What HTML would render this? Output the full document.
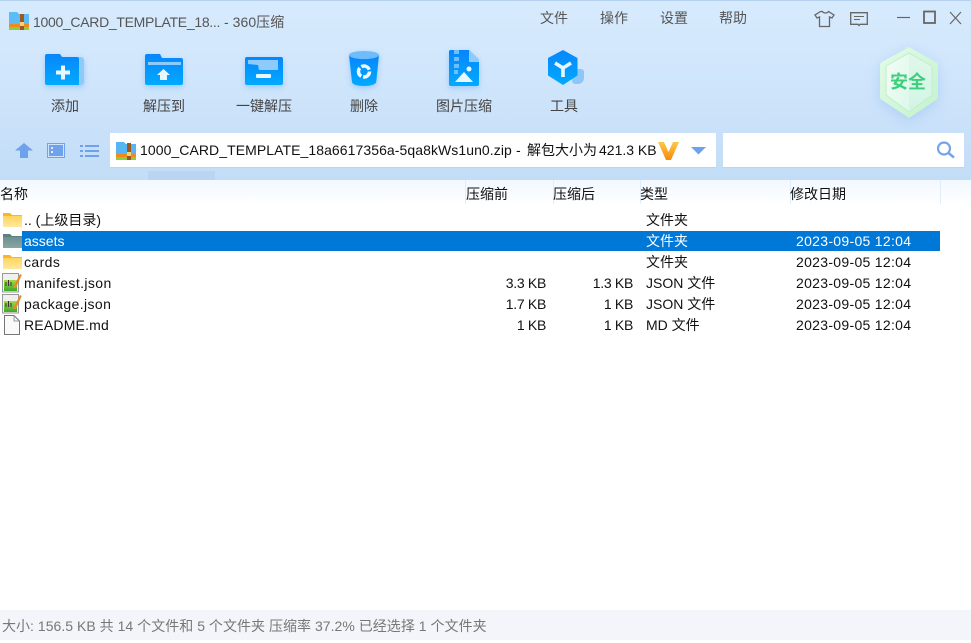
<!DOCTYPE html>
<html lang="zh">
<head>
<meta charset="utf-8">
<style>
html,body{margin:0;padding:0;width:971px;height:643px;overflow:hidden;background:#fff;}
body{position:relative;font-family:"Liberation Sans","Noto Sans CJK SC",sans-serif;font-size:14px;color:#111;}
.a{position:absolute;white-space:nowrap;line-height:20px;}
svg{position:absolute;display:block;overflow:visible;}
.top{position:absolute;left:0;top:0;width:971px;height:180px;background:linear-gradient(#d7eafd 0,#d2e7fc 60px,#c9e1f9 125px,#c3ddf7 180px);border-top:1px solid #b5d2f0;box-sizing:border-box;}
.tb{color:#444;font-size:14px;width:90px;text-align:center;top:96px;}
.menu{color:#555;font-size:14px;top:8px;}
.hd{position:absolute;left:0;top:180px;width:971px;height:26px;background:linear-gradient(#f2f8ff,#fbfdff 70%,#fff);}
.col{position:absolute;top:180px;width:1px;height:24px;background:#e0edfa;}
.h{top:184px;font-size:14px;color:#111;}
.sel{position:absolute;left:22px;top:231px;width:918px;height:20px;background:#0078d7;}
.n{left:24px;}
.t{left:646px;font-size:14px;}
.d{left:796px;font-size:14px;letter-spacing:.3px;}
.s{text-align:right;width:80px;font-size:14px;letter-spacing:-.3px;}
.st{position:absolute;left:0;top:610px;width:971px;height:30px;background:#f3f5fa;}
.w{color:#fff;}
</style>
</head>
<body>
<div class="top"></div>

<!-- title icon -->
<svg style="left:9px;top:11px" width="20" height="19" viewBox="0 0 20 19">
<path d="M0 1h8l2 2h10v13H0z" fill="#5cbcf5"/><rect y="13" width="20" height="3" fill="#f08a1c"/><rect y="16" width="20" height="3" fill="#8fce3a"/><rect x="11" y="3" width="4" height="16" fill="#9c5a1e"/><rect x="11" y="11" width="4" height="4" fill="#f3d27a"/>
</svg>
<div class="a" style="left:33px;top:12px;color:#555;font-size:14px;letter-spacing:-.3px">1000_CARD_TEMPLATE_18...</div>
<div class="a" style="left:224px;top:12px;color:#555;font-size:14px;letter-spacing:.05px">- 360压缩</div>

<!-- menu -->
<div class="a menu" style="left:540px">文件</div>
<div class="a menu" style="left:600px">操作</div>
<div class="a menu" style="left:660px">设置</div>
<div class="a menu" style="left:719px">帮助</div>

<!-- top right icons -->
<svg style="left:814px;top:10px" width="21" height="18" viewBox="0 0 21 18" fill="none" stroke="#666" stroke-width="1.3">
<path d="M6.500 1.500 1 5l2 3 2.500-1v9.500h10V7l2.500 1 2-3-5.500-3.500c-1 2-5 2-6 0z"/>
</svg>
<svg style="left:850px;top:12px" width="18" height="14" viewBox="0 0 18 14" fill="none" stroke="#666" stroke-width="1.300">
<path d="M.7.700h16.600v11.600H10l-1 1.200-1-1.200H.7z"/><path d="M4 4.500h10M4 7.500h6" stroke-width="1"/>
</svg>
<svg style="left:897px;top:10px" width="64" height="16" viewBox="0 0 64 16" fill="none" stroke="#666">
<path d="M0 7.500h13" stroke-width="1.200"/><rect x="27" y="1.500" width="11" height="11.500" stroke-width="1.800"/><path d="M53 2l11 12M64 2 53 14" stroke-width="1.200"/>
</svg>

<!-- add -->
<svg style="left:45px;top:54px;filter:drop-shadow(0 2px 3px rgba(30,140,250,.3))" width="39" height="31" viewBox="0 0 39 31">
<defs><linearGradient id="g" x1="0" y1="0" x2="0" y2="1"><stop offset="0" stop-color="#0786fb"/><stop offset="1" stop-color="#01aaff"/></linearGradient></defs>
<path d="M16 3h20a3 3 0 0 1 3 3v22a3 3 0 0 1-3 3h-4V3z" fill="#8ccbfb"/>
<path d="M2 0h13l2 3h15a2 2 0 0 1 2 2v26H2a2 2 0 0 1-2-2V2a2 2 0 0 1 2-2z" fill="url(#g)"/>
<path d="M16 12h4v5h5v4h-5v5h-4v-5h-5v-4h5z" fill="#e8f6ff" transform="translate(0 -.5)"/>
</svg>
<!-- extract to -->
<svg style="left:145px;top:54px;filter:drop-shadow(0 2px 3px rgba(30,140,250,.3))" width="38" height="31" viewBox="0 0 38 31">
<defs><linearGradient id="g2" x1="0" y1="0" x2="0" y2="1"><stop offset="0" stop-color="#0786fb"/><stop offset="1" stop-color="#01aaff"/></linearGradient></defs>
<path d="M2 0h13l2 4h19a2 2 0 0 1 2 2v23a2 2 0 0 1-2 2H2a2 2 0 0 1-2-2V2a2 2 0 0 1 2-2z" fill="url(#g2)"/>
<rect x="3" y="8" width="33" height="3" fill="#8ccbfb"/>
<path d="M18.500 15l6.500 6h-3v5h-7v-5h-3z" fill="#e8f6ff"/>
</svg>
<!-- one click -->
<svg style="left:245px;top:57px;filter:drop-shadow(0 2px 3px rgba(30,140,250,.3))" width="38" height="28" viewBox="0 0 38 28">
<defs><linearGradient id="g3" x1="0" y1="0" x2="0" y2="1"><stop offset="0" stop-color="#0786fb"/><stop offset="1" stop-color="#01aaff"/></linearGradient></defs>
<rect width="38" height="28" rx="2" fill="url(#g3)"/>
<path d="M3 3h30v10H14l-1-5-10-1z" fill="#8ccbfb"/>
<rect x="11" y="17" width="15" height="4" rx="1" fill="#e8f6ff"/>
</svg>
<!-- delete -->
<svg style="left:349px;top:50px;filter:drop-shadow(0 2px 3px rgba(30,140,250,.3))" width="30" height="37" viewBox="0 0 30 37">
<defs><linearGradient id="g4" x1="0" y1="0" x2="0" y2="1"><stop offset="0" stop-color="#0786fb"/><stop offset="1" stop-color="#01aaff"/></linearGradient></defs>
<path d="M0 5 3 32c.2 2.500 6 4 12 4S27 34.500 27.200 32L30 5z" fill="url(#g4)"/>
<ellipse cx="15" cy="5" rx="15" ry="4" fill="#6fbcfb"/>
<circle cx="15" cy="21.500" r="5.500" fill="none" stroke="#eef8ff" stroke-width="3.500" stroke-dasharray="9.500 2"/>
</svg>
<!-- image compress -->
<svg style="left:449px;top:50px;filter:drop-shadow(0 2px 3px rgba(30,140,250,.3))" width="30" height="36" viewBox="0 0 30 36">
<defs><linearGradient id="g5" x1="0" y1="0" x2="0" y2="1"><stop offset="0" stop-color="#0786fb"/><stop offset="1" stop-color="#01aaff"/></linearGradient></defs>
<path d="M1 0h19l10 10v24a2 2 0 0 1-2 2H2a2 2 0 0 1-2-2V1z" fill="url(#g5)"/>
<path d="M20 0l10 10v2H20z" fill="#8ccbfb"/>
<path d="M5 0h5v4H5zM5 7h5v4H5zM5 14h5v4H5zM5 20h4v4H5z" fill="#6ec0fb"/>
<path d="M6 32l9-10 9 10z" fill="#e8f6ff"/><circle cx="20" cy="19" r="2.500" fill="#e8f6ff"/>
</svg>
<!-- tools -->
<svg style="left:547px;top:50px" width="38" height="36" viewBox="0 0 38 36">
<defs><linearGradient id="g6" x1="0" y1="0" x2="0" y2="1"><stop offset="0" stop-color="#0786fb"/><stop offset="1" stop-color="#01aaff"/></linearGradient></defs>
<path d="M28 19h6a3 3 0 0 1 3 3v6a6 6 0 0 1-6 6h-3a3 3 0 0 1-3-3z" fill="#8fc6fa"/>
<path d="M16 0l14.500 8v17.500L16 35 1 25.500V8z" fill="url(#g6)"/>
<path d="M8 13l8 5 8-5M16 18v9" fill="none" stroke="#e8f6ff" stroke-width="3.600"/>
</svg>

<div class="a tb" style="left:20px">添加</div>
<div class="a tb" style="left:119px">解压到</div>
<div class="a tb" style="left:219px">一键解压</div>
<div class="a tb" style="left:319px">删除</div>
<div class="a tb" style="left:419px">图片压缩</div>
<div class="a tb" style="left:519px">工具</div>

<!-- shield -->
<svg style="left:880px;top:47px;filter:drop-shadow(0 3px 6px rgba(90,150,240,.25))" width="58" height="72" viewBox="0 0 58 72">
<defs>
<linearGradient id="so" x1="0" y1="0" x2="1" y2="1"><stop offset="0" stop-color="#e4fbe8"/><stop offset="1" stop-color="#c2f2cc"/></linearGradient>
<linearGradient id="sl" x1="0" y1="0" x2="1" y2="1"><stop offset="0" stop-color="#f4fdf7"/><stop offset="1" stop-color="#dcf8ea"/></linearGradient>
<linearGradient id="sr" x1="0" y1="0" x2="0" y2="1"><stop offset="0" stop-color="#dff7e9"/><stop offset="1" stop-color="#d2f5e6"/></linearGradient>
</defs>
<path d="M29 0 56 15q2 1 2 3v32q0 2-2 3L29 71 2 53q-2-1-2-3V18q0-2 2-3z" fill="url(#so)"/>
<path d="M29 6 52 19v29L29 65z" fill="url(#sr)"/>
<path d="M29 6 6 19v29l23 17z" fill="url(#sl)"/>
<path d="M29 6 52 19v29L29 65 6 48V19z" fill="none" stroke="#bdf0c8" stroke-width="1"/>
</svg>
<div class="a" style="left:890px;top:72px;width:40px;font-size:18px;font-weight:700;color:#3ccf7c">安全</div>

<!-- nav icons -->
<svg style="left:15px;top:143px" width="84" height="16" viewBox="0 0 84 16" fill="#6ea2ec">
<path d="M9 0 18 7.500h-5V15H5V7.500H0z"/>
<rect x="32" y="0" width="18" height="15"/><rect x="33" y="1" width="16" height="13" fill="#cfe3fa"/><rect x="34" y="2" width="14" height="11"/><rect x="36" y="4" width="2" height="2" fill="#dfeefd"/><rect x="36" y="8" width="2" height="2" fill="#dfeefd"/>
<path d="M65 2h3v2h-3zM70 2h14v2H70zM65 7h3v2h-3zM70 7h14v2H70zM65 12h3v2h-3zM70 12h14v2H70z"/>
</svg>

<!-- address box -->
<div class="a" style="left:110px;top:133px;width:606px;height:35px;background:#fff;border-bottom:1px solid #b9d5f2;box-sizing:border-box"></div>
<svg style="left:116px;top:141px" width="20" height="20" viewBox="0 0 20 20">
<path d="M0 1h8l2 2h10v12H0z" fill="#55b6f3"/><rect y="13" width="20" height="3" fill="#f08a1c"/><rect y="16" width="20" height="3" fill="#8fce3a"/><rect x="11" y="2" width="4" height="17" fill="#9c5a1e"/><rect x="11" y="11" width="4" height="4" fill="#f3d27a"/>
</svg>
<div class="a" style="left:140px;top:140px;letter-spacing:.07px">1000_CARD_TEMPLATE_18a6617356a-5qa8kWs1un0.zip</div>
<div class="a" style="left:516px;top:140px">-</div>
<div class="a" style="left:527px;top:140px">解包大小为</div>
<div class="a" style="left:599px;top:140px">421.3 KB</div>
<svg style="left:658px;top:141px" width="21" height="20" viewBox="0 0 21 20">
<defs><linearGradient id="vg" x1="0" y1="0" x2="0" y2="1"><stop offset="0" stop-color="#fac94a"/><stop offset="1" stop-color="#f88a08"/></linearGradient></defs>
<path d="M0 1h6l4.500 10L15 1h6l-8 18H8z" fill="url(#vg)"/>
</svg>
<svg style="left:691px;top:147px" width="15" height="8" viewBox="0 0 15 8"><path d="M0 0h15l-7.500 7.500z" fill="#6ea2ec"/></svg>
<div class="a" style="left:723px;top:133px;width:241px;height:35px;background:#fff;border-bottom:1px solid #b9d5f2;box-sizing:border-box"></div>
<svg style="left:936px;top:141px" width="20" height="18" viewBox="0 0 20 18" fill="none" stroke="#74a6ea" stroke-width="2.200">
<circle cx="8" cy="7.500" r="6"/><path d="M12.500 12l5.500 4.500" stroke-width="2.600"/>
</svg>
<div class="a" style="left:148px;top:171px;width:67px;height:9px;background:#b9d5f1"></div>

<!-- header -->
<div class="hd"></div>
<div class="col" style="left:465px"></div>
<div class="col" style="left:553px"></div>
<div class="col" style="left:640px"></div>
<div class="col" style="left:790px"></div>
<div class="col" style="left:940px"></div>
<div class="a h" style="left:0">名称</div>
<div class="a h" style="left:466px">压缩前</div>
<div class="a h" style="left:553px">压缩后</div>
<div class="a h" style="left:640px">类型</div>
<div class="a h" style="left:790px">修改日期</div>

<!-- selected -->
<div class="sel"></div>

<!-- file icons -->
<svg width="0" height="0" style="left:0;top:0"><defs>
<linearGradient id="fy" x1="0" y1="0" x2="0" y2="1"><stop offset="0" stop-color="#ffd45c"/><stop offset="1" stop-color="#ffe9a0"/></linearGradient>
<linearGradient id="fg" x1="0" y1="0" x2="0" y2="1"><stop offset="0" stop-color="#6e9090"/><stop offset="1" stop-color="#8aa5a4"/></linearGradient>
<linearGradient id="pg" x1="0" y1="0" x2="0" y2="1"><stop offset="0" stop-color="#a8d84a"/><stop offset="1" stop-color="#3ea82a"/></linearGradient>
</defs></svg>
<svg style="left:3px;top:213px" width="19" height="14" viewBox="0 0 19 14"><path d="M0 0h7l2 2h10v12H0z" fill="#f7b72c"/><rect y="3" width="19" height="11" fill="url(#fy)"/></svg>
<svg style="left:3px;top:234px" width="19" height="14" viewBox="0 0 19 14"><path d="M0 0h7l2 2h10v12H0z" fill="#5f8080"/><rect y="3" width="19" height="11" fill="url(#fg)"/></svg>
<svg style="left:3px;top:255px" width="19" height="14" viewBox="0 0 19 14"><path d="M0 0h7l2 2h10v12H0z" fill="#f7b72c"/><rect y="3" width="19" height="11" fill="url(#fy)"/></svg>
<svg style="left:2px;top:273px" width="20" height="20" viewBox="0 0 20 20">
<rect x=".5" y=".5" width="16" height="18.500" fill="#f0f0ec" stroke="#999"/><rect x="2" y="7" width="13" height="11" fill="url(#pg)"/><path d="M4 13V9M6.500 13V7M9 13V9" stroke="#333" stroke-width="1"/><path d="M11 15 18 1l1.800 1-6 13z" fill="#e88a2c"/>
</svg>
<svg style="left:2px;top:294px" width="20" height="20" viewBox="0 0 20 20">
<rect x=".5" y=".5" width="16" height="18.500" fill="#f0f0ec" stroke="#999"/><rect x="2" y="7" width="13" height="11" fill="url(#pg)"/><path d="M4 13V9M6.500 13V7M9 13V9" stroke="#333" stroke-width="1"/><path d="M11 15 18 1l1.800 1-6 13z" fill="#e88a2c"/>
</svg>
<svg style="left:4px;top:315px" width="16" height="20" viewBox="0 0 16 20"><path d="M.5.500h9.500l5.500 5.500v13.500H.5z" fill="#fafafa" stroke="#777"/><path d="M10 .5V6h5.500" fill="none" stroke="#999"/></svg>

<!-- rows -->
<div class="a n" style="top:210px">.. (上级目录)</div>
<div class="a t" style="top:210px">文件夹</div>

<div class="a n w" style="top:231px">assets</div>
<div class="a t w" style="top:231px">文件夹</div>
<div class="a d w" style="top:231px">2023-09-05 12:04</div>

<div class="a n" style="top:252px;letter-spacing:.4px">cards</div>
<div class="a t" style="top:252px">文件夹</div>
<div class="a d" style="top:252px">2023-09-05 12:04</div>

<div class="a n" style="top:273px;letter-spacing:.4px">manifest.json</div>
<div class="a s" style="top:273px;left:466px">3.3 KB</div>
<div class="a s" style="top:273px;left:553px">1.3 KB</div>
<div class="a t" style="top:273px">JSON 文件</div>
<div class="a d" style="top:273px">2023-09-05 12:04</div>

<div class="a n" style="top:294px;letter-spacing:.4px">package.json</div>
<div class="a s" style="top:294px;left:466px">1.7 KB</div>
<div class="a s" style="top:294px;left:553px">1 KB</div>
<div class="a t" style="top:294px">JSON 文件</div>
<div class="a d" style="top:294px">2023-09-05 12:04</div>

<div class="a n" style="top:315px;letter-spacing:.2px">README.md</div>
<div class="a s" style="top:315px;left:466px">1 KB</div>
<div class="a s" style="top:315px;left:553px">1 KB</div>
<div class="a t" style="top:315px">MD 文件</div>
<div class="a d" style="top:315px">2023-09-05 12:04</div>

<!-- status -->
<div class="st"></div>
<div class="a" style="left:2px;top:616px;color:#777;font-size:14px;letter-spacing:.03px">大小: 156.5 KB 共 14 个文件和 5 个文件夹 压缩率 37.2% 已经选择 1 个文件夹</div>
</body>
</html>
